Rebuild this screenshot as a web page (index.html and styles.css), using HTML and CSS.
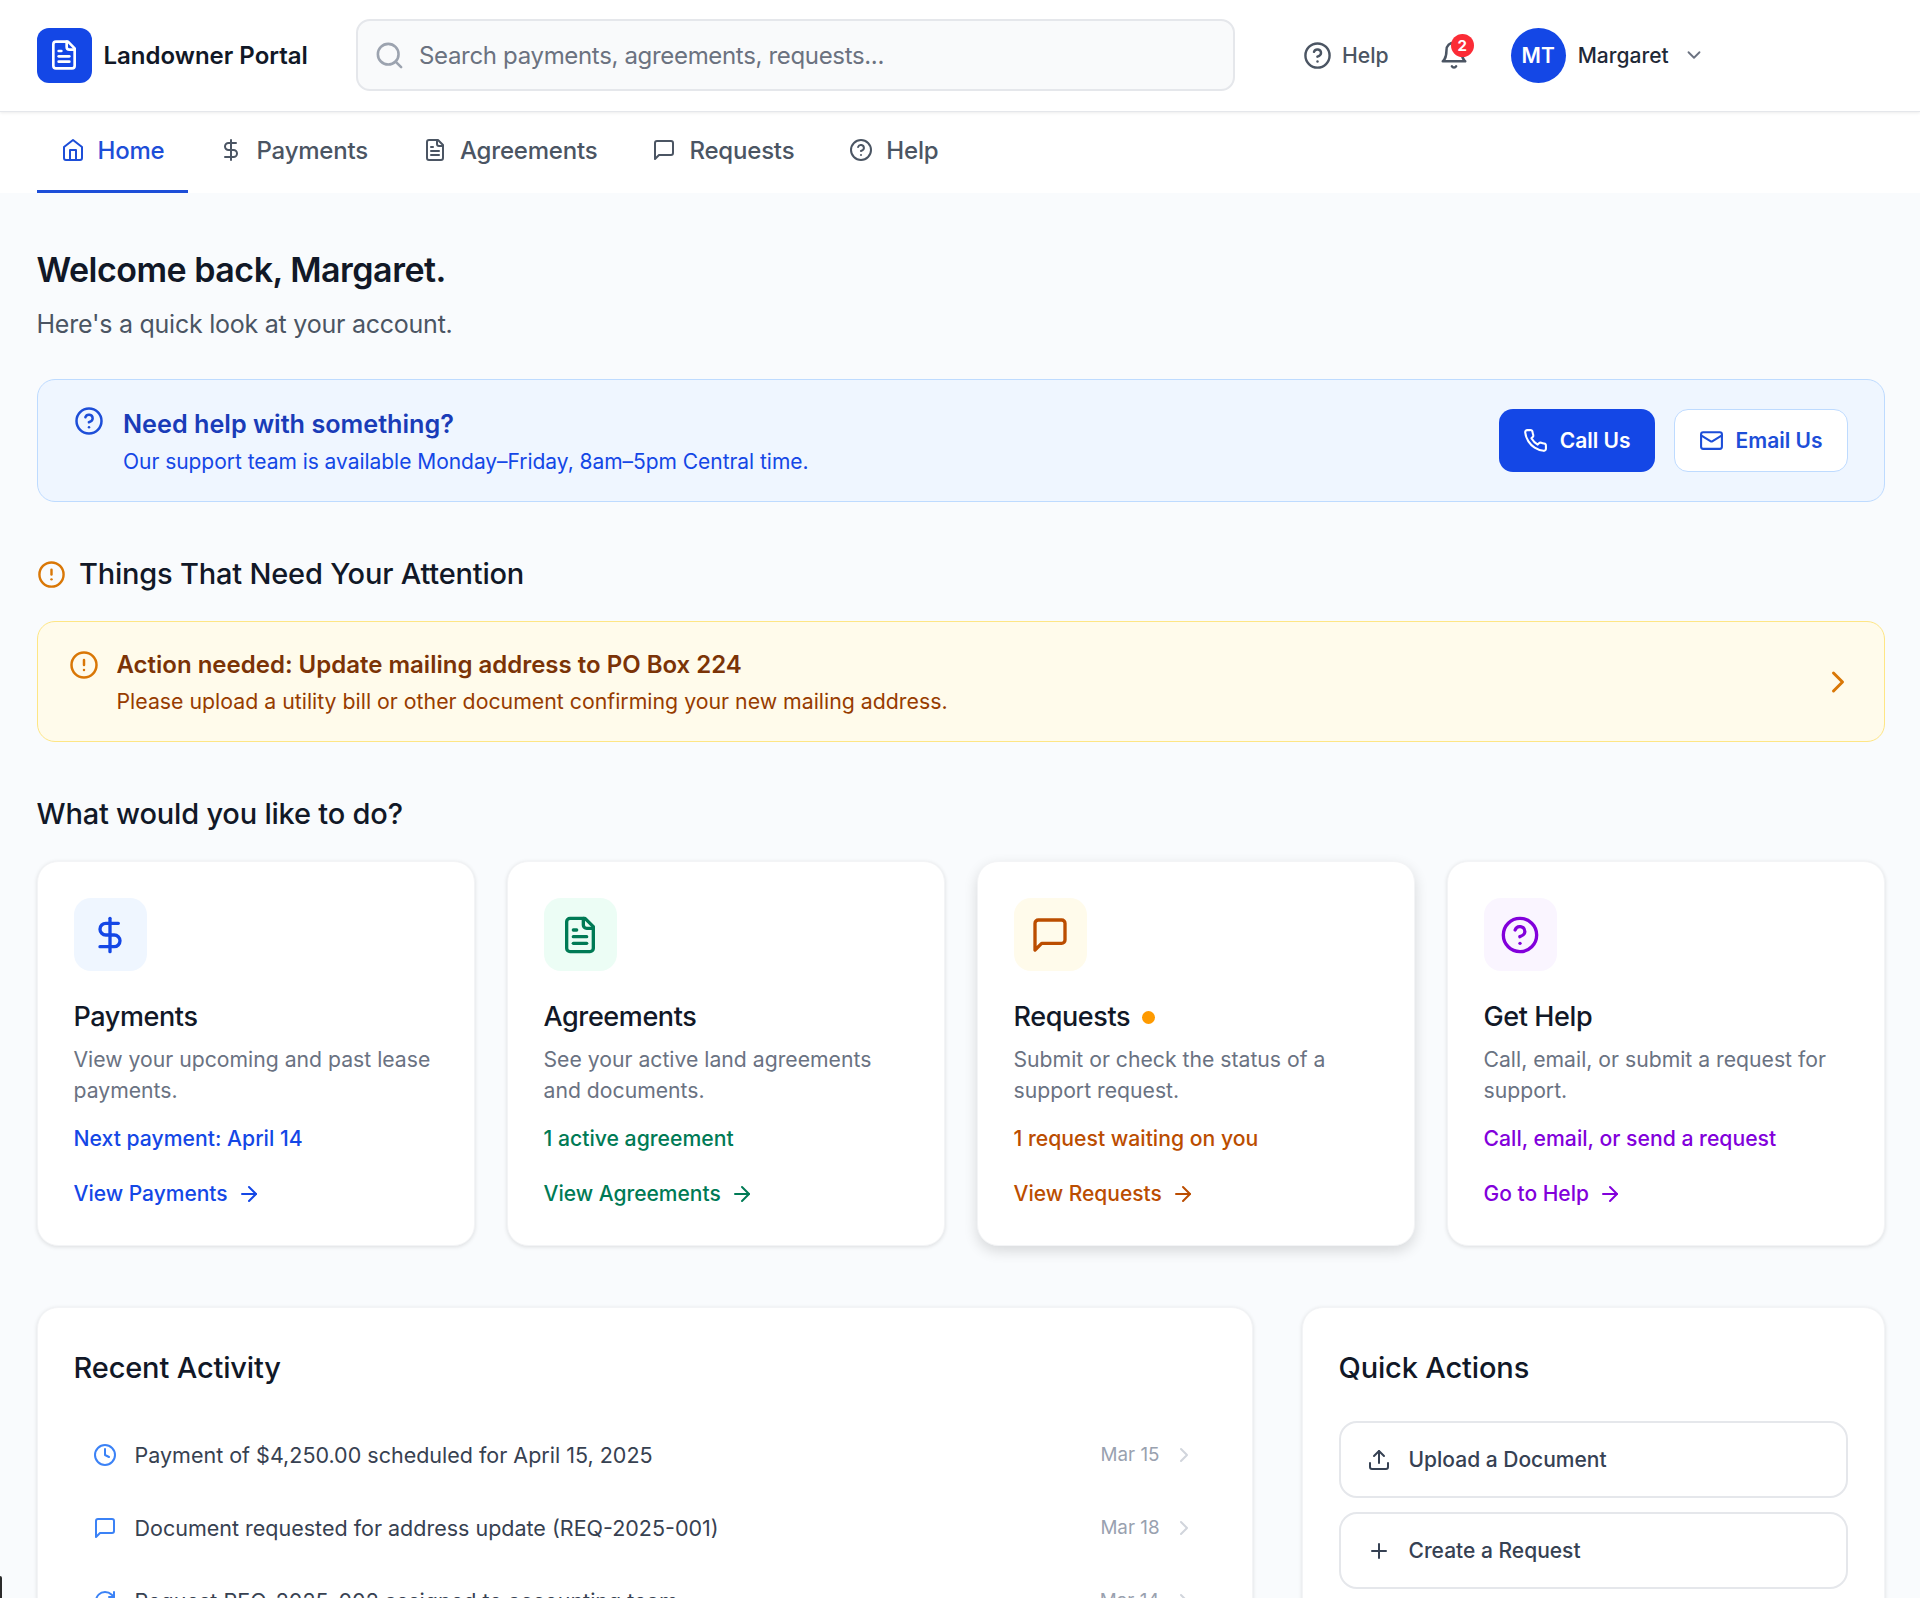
FILE: index.html
```html
<!DOCTYPE html>
<html lang="en">
<head>
    <meta charset="UTF-8">
    <meta name="viewport" content="width=device-width, initial-scale=1.0">
    <title>Landowner Portal</title>
    <link rel="stylesheet" href="styles.css">
</head>
<body>
    <svg class="sprites" width="0" height="0">
        <symbol id="i-doc" viewBox="0 0 24 24"><path d="M15 2H6a2 2 0 0 0-2 2v16a2 2 0 0 0 2 2h12a2 2 0 0 0 2-2V7z"/><path d="M14 2v4a2 2 0 0 0 2 2h4"/><path d="M10 9H8"/><path d="M16 13H8"/><path d="M16 17H8"/></symbol>
        <symbol id="i-help" viewBox="0 0 24 24"><circle cx="12" cy="12" r="10"/><path d="M9.09 9a3 3 0 0 1 5.83 1c0 2-3 3-3 3"/><path d="M12 17h.01"/></symbol>
        <symbol id="i-dollar" viewBox="0 0 24 24"><line x1="12" x2="12" y1="2" y2="22"/><path d="M17 5H9.5a3.5 3.5 0 0 0 0 7h5a3.5 3.5 0 0 1 0 7H6"/></symbol>
        <symbol id="i-chat" viewBox="0 0 24 24"><path d="M21 15a2 2 0 0 1-2 2H7l-4 4V5a2 2 0 0 1 2-2h14a2 2 0 0 1 2 2z"/></symbol>
        <symbol id="i-alert" viewBox="0 0 24 24"><circle cx="12" cy="12" r="10"/><line x1="12" x2="12" y1="8" y2="12"/><line x1="12" x2="12.01" y1="16" y2="16"/></symbol>
        <symbol id="i-arrow" viewBox="0 0 24 24"><path d="M5 12h14"/><path d="m12 5 7 7-7 7"/></symbol>
        <symbol id="i-right" viewBox="0 0 24 24"><path d="m9 18 6-6-6-6"/></symbol>
    </svg>

    <header class="topbar">
        <div class="brand">
            <span class="brand-logo"><svg class="icon"><use href="#i-doc"/></svg></span>
            <span class="brand-name">Landowner Portal</span>
        </div>
        <div class="search">
            <svg class="icon" viewBox="0 0 24 24"><circle cx="11" cy="11" r="8"/><path d="m21 21-4.3-4.3"/></svg>
            <span>Search payments, agreements, requests...</span>
        </div>
        <div class="top-help">
            <svg class="icon"><use href="#i-help"/></svg>
            <span>Help</span>
        </div>
        <div class="bell">
            <svg class="icon" viewBox="0 0 24 24"><path d="M6 8a6 6 0 0 1 12 0c0 7 3 9 3 9H3s3-2 3-9"/><path d="M10.3 21a1.94 1.94 0 0 0 3.4 0"/></svg>
            <span class="bell-count">2</span>
        </div>
        <div class="user">
            <span class="avatar">MT</span>
            <span class="user-name">Margaret</span>
            <svg class="icon" viewBox="0 0 24 24"><path d="m6 9 6 6 6-6"/></svg>
        </div>
    </header>

    <nav class="tabs">
        <a class="tab active"><svg class="icon" viewBox="0 0 24 24"><path d="m3 9 9-7 9 7v11a2 2 0 0 1-2 2H5a2 2 0 0 1-2-2z"/><path d="M9 22V12h6v10"/></svg>Home</a>
        <a class="tab"><svg class="icon"><use href="#i-dollar"/></svg>Payments</a>
        <a class="tab"><svg class="icon"><use href="#i-doc"/></svg>Agreements</a>
        <a class="tab"><svg class="icon"><use href="#i-chat"/></svg>Requests</a>
        <a class="tab"><svg class="icon"><use href="#i-help"/></svg>Help</a>
    </nav>

    <main class="content">
        <h1>Welcome back, Margaret.</h1>
        <p class="lead">Here's a quick look at your account.</p>

        <!-- Support banner -->
        <section class="support">
            <svg class="icon support-icon"><use href="#i-help"/></svg>
            <div class="support-text">
                <h3>Need help with something?</h3>
                <p>Our support team is available Monday–Friday, 8am–5pm Central time.</p>
            </div>
            <a class="btn btn-primary"><svg class="icon" viewBox="0 0 24 24"><path d="M22 16.92v3a2 2 0 0 1-2.18 2 19.79 19.79 0 0 1-8.63-3.07 19.5 19.5 0 0 1-6-6 19.79 19.79 0 0 1-3.07-8.67A2 2 0 0 1 4.11 2h3a2 2 0 0 1 2 1.72 12.84 12.84 0 0 0 .7 2.81 2 2 0 0 1-.45 2.11L8.09 9.91a16 16 0 0 0 6 6l1.27-1.27a2 2 0 0 1 2.11-.45 12.84 12.84 0 0 0 2.81.7A2 2 0 0 1 22 16.92z"/></svg>Call Us</a>
            <a class="btn btn-plain"><svg class="icon" viewBox="0 0 24 24"><rect width="20" height="16" x="2" y="4" rx="2"/><path d="m22 7-8.97 5.7a1.94 1.94 0 0 1-2.06 0L2 7"/></svg>Email Us</a>
        </section>

        <h2 class="attention-title"><svg class="icon"><use href="#i-alert"/></svg>Things That Need Your Attention</h2>

        <section class="notice">
            <svg class="icon notice-icon"><use href="#i-alert"/></svg>
            <div class="notice-text">
                <h3>Action needed: Update mailing address to PO Box 224</h3>
                <p>Please upload a utility bill or other document confirming your new mailing address.</p>
            </div>
            <svg class="icon notice-chevron"><use href="#i-right"/></svg>
        </section>

        <h2 class="todo-title">What would you like to do?</h2>

        <section class="cards">
            <article class="card blue">
                <span class="card-icon"><svg class="icon"><use href="#i-dollar"/></svg></span>
                <h3>Payments</h3>
                <p class="card-desc">View your upcoming and past lease payments.</p>
                <p class="card-status">Next payment: April 14</p>
                <a class="card-link">View Payments<svg class="icon"><use href="#i-arrow"/></svg></a>
            </article>
            <article class="card green">
                <span class="card-icon"><svg class="icon"><use href="#i-doc"/></svg></span>
                <h3>Agreements</h3>
                <p class="card-desc">See your active land agreements and documents.</p>
                <p class="card-status">1 active agreement</p>
                <a class="card-link">View Agreements<svg class="icon"><use href="#i-arrow"/></svg></a>
            </article>
            <article class="card amber raised">
                <span class="card-icon"><svg class="icon"><use href="#i-chat"/></svg></span>
                <h3>Requests<span class="dot"></span></h3>
                <p class="card-desc">Submit or check the status of a support request.</p>
                <p class="card-status">1 request waiting on you</p>
                <a class="card-link">View Requests<svg class="icon"><use href="#i-arrow"/></svg></a>
            </article>
            <article class="card purple">
                <span class="card-icon"><svg class="icon"><use href="#i-help"/></svg></span>
                <h3>Get Help</h3>
                <p class="card-desc">Call, email, or submit a request for support.</p>
                <p class="card-status">Call, email, or send a request</p>
                <a class="card-link">Go to Help<svg class="icon"><use href="#i-arrow"/></svg></a>
            </article>
        </section>

        <section class="lower">
            <div class="panel">
                <h2>Recent Activity</h2>
                <ul class="activity">
                    <li>
                        <svg class="icon" viewBox="0 0 24 24"><circle cx="12" cy="12" r="10"/><path d="M12 6v6l4 2"/></svg>
                        <span class="activity-text">Payment of $4,250.00 scheduled for April 15, 2025</span>
                        <span class="activity-date">Mar 15</span>
                        <svg class="icon chevron"><use href="#i-right"/></svg>
                    </li>
                    <li>
                        <svg class="icon"><use href="#i-chat"/></svg>
                        <span class="activity-text">Document requested for address update (REQ-2025-001)</span>
                        <span class="activity-date">Mar 18</span>
                        <svg class="icon chevron"><use href="#i-right"/></svg>
                    </li>
                    <li>
                        <svg class="icon" viewBox="0 0 24 24"><path d="M21 12a9 9 0 1 1-9-9c2.52 0 4.93 1 6.74 2.74L21 8"/><path d="M21 3v5h-5"/></svg>
                        <span class="activity-text">Request REQ-2025-002 assigned to accounting team</span>
                        <span class="activity-date">Mar 14</span>
                        <svg class="icon chevron"><use href="#i-right"/></svg>
                    </li>
                </ul>
            </div>
            <div class="panel">
                <h2 class="quick-title">Quick Actions</h2>
                <a class="quick"><svg class="icon" viewBox="0 0 24 24"><path d="M21 15v4a2 2 0 0 1-2 2H5a2 2 0 0 1-2-2v-4"/><path d="m17 8-5-5-5 5"/><path d="M12 3v12"/></svg>Upload a Document</a>
                <a class="quick"><svg class="icon" viewBox="0 0 24 24"><path d="M5 12h14"/><path d="M12 5v14"/></svg>Create a Request</a>
            </div>
        </section>
    </main>

    <div class="window-edge"></div>
</body>
</html>
```

FILE: styles.css
```css
* {
    box-sizing: border-box;
}
html, body {
    height: 100%;
    overflow: hidden;
}
body {
    margin: 0;
    font-family: Inter, "Liberation Sans", sans-serif;
    background-color: #f9fbfd;
    color: #111827;
}
h1, h2, h3, p, ul {
    margin: 0;
    padding: 0;
}
.sprites {
    position: absolute;
}
.icon {
    display: block;
    flex: none;
    width: 24px;
    height: 24px;
    fill: none;
    stroke: currentColor;
    stroke-width: 2;
    stroke-linecap: round;
    stroke-linejoin: round;
}

/* Top bar */
.topbar {
    position: relative;
    z-index: 1;
    display: flex;
    align-items: center;
    height: 112px;
    padding: 0 35px 1px 36.5px;
    background-color: #fff;
    border-bottom: 1px solid #e5e7eb;
    box-shadow: 0 1px 3px rgba(0, 0, 0, 0.08);
}
.brand {
    display: flex;
    align-items: center;
    gap: 12px;
    width: 319.5px;
    flex: none;
}
.brand-logo {
    display: flex;
    align-items: center;
    justify-content: center;
    width: 55px;
    height: 55px;
    border-radius: 12px;
    background-color: #1447e6;
    color: #fff;
}
.brand-logo .icon {
    width: 32px;
    height: 32px;
}
.brand-name {
    font-size: 24px;
    font-weight: 600;
}
.search {
    display: flex;
    align-items: center;
    gap: 14px;
    width: 879px;
    height: 72px;
    padding: 0 16px;
    background-color: #f9fafb;
    border: 2px solid #e5e7eb;
    border-radius: 14px;
    font-size: 24px;
    letter-spacing: -0.33px;
    color: #6b7280;
}
.search .icon {
    width: 31px;
    height: 31px;
    color: #9ca3af;
}
.top-help {
    display: flex;
    align-items: center;
    gap: 10px;
    margin-left: 68px;
    font-size: 21.2px;
    font-weight: 500;
    color: #4b5563;
}
.top-help .icon {
    width: 29px;
    height: 29px;
}
.bell {
    position: relative;
    margin-left: 50px;
    color: #4b5563;
}
.bell .icon {
    width: 30px;
    height: 30px;
}
.bell-count {
    position: absolute;
    top: -6px;
    right: -5px;
    width: 23px;
    height: 23px;
    border-radius: 50%;
    background-color: #fb2c36;
    color: #fff;
    font-size: 15px;
    font-weight: 700;
    line-height: 23px;
    text-align: center;
}
.user {
    display: flex;
    align-items: center;
    margin-left: 42px;
}
.avatar {
    display: flex;
    align-items: center;
    justify-content: center;
    width: 55px;
    height: 55px;
    border-radius: 50%;
    background-color: #1447e6;
    color: #fff;
    font-size: 21px;
    font-weight: 600;
}
.user-name {
    margin: 0 14px 0 12px;
    font-size: 21px;
    font-weight: 500;
    color: #1f2937;
}
.user .icon {
    width: 22px;
    height: 22px;
    color: #6b7280;
}

/* Tabs */
.tabs {
    display: flex;
    gap: 7px;
    height: 81px;
    padding: 0 36px 0 36.5px;
    background-color: #fff;
}
.tab {
    display: flex;
    align-items: center;
    gap: 13px;
    padding: 0 24px 2px;
    font-size: 24px;
    font-weight: 500;
    letter-spacing: -0.2px;
    color: #4b5563;
    border-bottom: 3px solid transparent;
}
.tab.active {
    color: #1d4ed8;
    border-bottom-color: #1d4ed8;
}

/* Main column */
.content {
    padding: 55px 35.5px 0 36.5px;
}
h1 {
    font-size: 34px;
    font-weight: 600;
    line-height: 44px;
    letter-spacing: -0.5px;
}
.lead {
    margin-top: 15px;
    font-size: 25px;
    line-height: 34px;
    letter-spacing: -0.24px;
    color: #4b5563;
}
.support {
    display: flex;
    align-items: center;
    gap: 19px;
    height: 123px;
    margin-top: 38px;
    padding: 0 36px 0 36.5px;
    background-color: #eff6ff;
    border: 1px solid #bedbff;
    border-radius: 18px;
}
.support-icon {
    align-self: flex-start;
    width: 30px;
    height: 30px;
    margin-top: 26px;
    color: #1d4ed8;
}
.support-text {
    flex: 1;
    padding-top: 2px;
    color: #1447e6;
}
.support-text h3 {
    font-size: 25.2px;
    font-weight: 600;
    line-height: 34px;
    color: #193cb8;
}
.support-text p {
    margin-top: 6px;
    font-size: 21px;
    line-height: 30px;
    letter-spacing: -0.04px;
}
.btn {
    display: flex;
    align-items: center;
    gap: 12px;
    height: 63px;
    padding: 0 24px;
    border-radius: 14px;
    font-size: 21px;
    font-weight: 600;
}
.btn .icon {
    width: 25px;
    height: 25px;
}
.btn-primary {
    background-color: #1447e6;
    color: #fff;
}
.btn-plain {
    background-color: #fff;
    color: #1d4ed8;
    border: 1px solid #bedbff;
}
.attention-title, .todo-title {
    font-size: 29px;
    font-weight: 500;
    line-height: 40px;
    letter-spacing: -0.2px;
}
.attention-title {
    display: flex;
    align-items: center;
    gap: 13.5px;
    margin-top: 52px;
}
.attention-title .icon {
    width: 29px;
    height: 29px;
    color: #d97706;
}
.notice {
    display: flex;
    align-items: center;
    gap: 18px;
    height: 121px;
    margin-top: 27px;
    padding: 0 28px 0 31px;
    background-color: #fffbeb;
    border: 1px solid #fee685;
    border-radius: 18px;
}
.notice-icon {
    align-self: flex-start;
    width: 30px;
    height: 30px;
    margin-top: 28px;
    color: #d97706;
}
.notice-text {
    flex: 1;
    padding-top: 1px;
}
.notice-text h3 {
    font-size: 24px;
    font-weight: 600;
    line-height: 34px;
    color: #7b3306;
}
.notice-text p {
    margin-top: 4px;
    font-size: 21.3px;
    line-height: 30px;
    color: #973c00;
}
.notice-chevron {
    width: 36px;
    height: 36px;
    color: #d97706;
}
.todo-title {
    margin-top: 52px;
}

/* Cards */
.cards {
    display: grid;
    grid-template-columns: repeat(4, 1fr);
    gap: 32px;
    margin-top: 27px;
}
.card {
    height: 385px;
    padding: 36px;
    background-color: #fff;
    border: 1px solid #f3f4f6;
    border-radius: 21px;
    box-shadow: 0 1px 4px rgba(0, 0, 0, 0.12);
}
.card.raised {
    box-shadow: 0 5px 14px rgba(0, 0, 0, 0.14);
}
.card-icon {
    display: flex;
    align-items: center;
    justify-content: center;
    width: 73px;
    height: 73px;
    border-radius: 17px;
}
.card-icon .icon {
    width: 40px;
    height: 40px;
}
.card h3 {
    display: flex;
    align-items: center;
    gap: 12px;
    margin-top: 28px;
    font-size: 27px;
    font-weight: 500;
    line-height: 36px;
    letter-spacing: -0.4px;
}
.dot {
    width: 13px;
    height: 13px;
    border-radius: 50%;
    background-color: #fe9a00;
}
.card-desc {
    margin-top: 9px;
    font-size: 21.2px;
    line-height: 30.5px;
    color: #6a7282;
}
.card-status {
    margin-top: 18px;
    font-size: 21.2px;
    font-weight: 500;
    line-height: 30px;
}
.card-link {
    display: flex;
    align-items: center;
    gap: 9px;
    margin-top: 26px;
    font-size: 21px;
    font-weight: 500;
    line-height: 30px;
}
.card-link .icon {
    width: 24px;
    height: 24px;
}
.blue .card-icon { background-color: #eff6ff; }
.blue .icon, .blue .card-status, .blue .card-link { color: #1447e6; }
.green .card-icon { background-color: #ecfdf5; }
.green .icon, .green .card-status, .green .card-link { color: #007a55; }
.amber .card-icon { background-color: #fffbeb; }
.amber .icon, .amber .card-status, .amber .card-link { color: #bb4d00; }
.purple .card-icon { background-color: #faf5ff; }
.purple .icon, .purple .card-status, .purple .card-link { color: #8200db; }

/* Lower panels */
.lower {
    display: grid;
    grid-template-columns: 1216px 583px;
    gap: 49px;
    margin-top: 61px;
}
.panel {
    height: 500px;
    padding: 39px 36px;
    background-color: #fff;
    border: 1px solid #f3f4f6;
    border-radius: 21px;
    box-shadow: 0 1px 4px rgba(0, 0, 0, 0.12);
}
.panel h2 {
    font-size: 29px;
    font-weight: 500;
    line-height: 42px;
    letter-spacing: -0.15px;
}
.activity {
    margin-top: 29px;
    list-style: none;
}
.activity li {
    display: flex;
    align-items: center;
    height: 73px;
    padding: 0 20px 0 19px;
}
.activity .icon {
    color: #3b82f6;
}
.activity-text {
    flex: 1;
    margin-left: 18px;
    font-size: 21.5px;
    color: #374151;
}
.activity-date {
    font-size: 18.8px;
    color: #99a1af;
}
.activity .chevron {
    margin-left: 12px;
    color: #d1d5dc;
}
.quick {
    display: flex;
    align-items: center;
    gap: 18px;
    height: 77px;
    margin-top: 14px;
    padding: 0 26px;
    border: 2px solid #e5e7eb;
    border-radius: 18px;
    font-size: 21px;
    font-weight: 500;
    color: #364153;
}
.quick-title + .quick {
    margin-top: 32px;
}

/* Dark corner of the captured window, bottom left */
.window-edge {
    position: absolute;
    left: 0;
    bottom: 0;
    width: 2px;
    height: 22px;
    background-color: #2b2b2b;
    border-top-right-radius: 2px;
}
```
